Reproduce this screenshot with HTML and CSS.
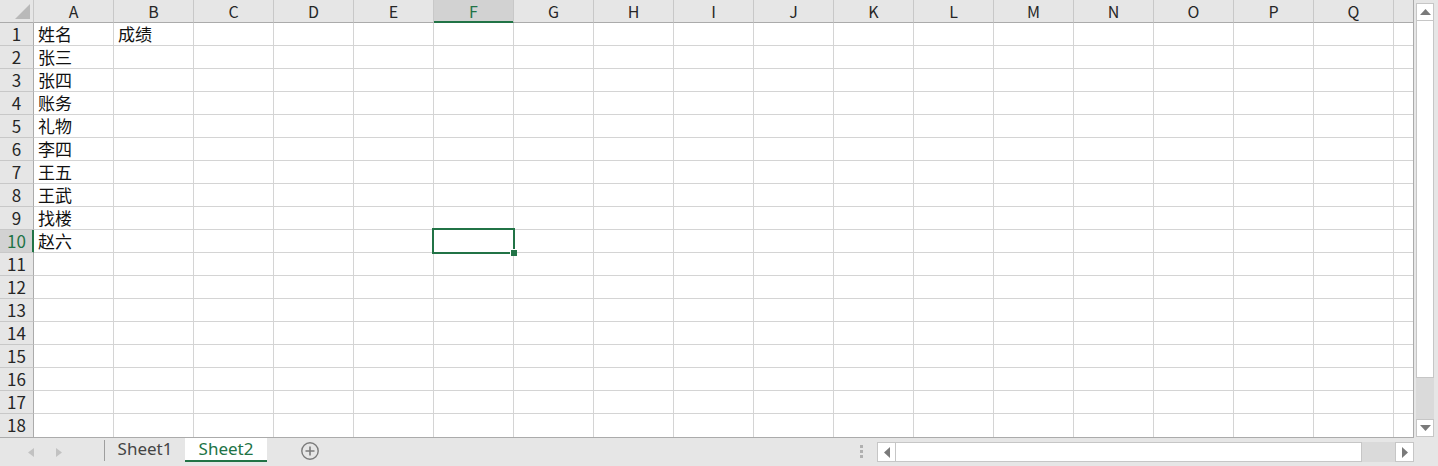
FILE: index.html
```html
<!DOCTYPE html>
<html lang="zh-CN">
<head>
<meta charset="utf-8">
<title>Sheet2</title>
<link rel="stylesheet" href="styles.css">
</head>
<body>
<div class="app">
  <div class="main">
    <div class="sheet">
      <div class="row head">
        <div class="corner"><span class="tri"></span></div>
        <div class="ch">A</div><div class="ch">B</div><div class="ch">C</div><div class="ch">D</div><div class="ch">E</div><div class="ch sel">F</div><div class="ch">G</div><div class="ch">H</div><div class="ch">I</div><div class="ch">J</div><div class="ch">K</div><div class="ch">L</div><div class="ch">M</div><div class="ch">N</div><div class="ch">O</div><div class="ch">P</div><div class="ch">Q</div><div class="ch part"></div>
      </div>
      <div class="row"><div class="rh">1</div><div class="c">姓名</div><div class="c">成绩</div><div class="c"></div><div class="c"></div><div class="c"></div><div class="c"></div><div class="c"></div><div class="c"></div><div class="c"></div><div class="c"></div><div class="c"></div><div class="c"></div><div class="c"></div><div class="c"></div><div class="c"></div><div class="c"></div><div class="c"></div><div class="c part"></div></div>
      <div class="row"><div class="rh">2</div><div class="c">张三</div><div class="c"></div><div class="c"></div><div class="c"></div><div class="c"></div><div class="c"></div><div class="c"></div><div class="c"></div><div class="c"></div><div class="c"></div><div class="c"></div><div class="c"></div><div class="c"></div><div class="c"></div><div class="c"></div><div class="c"></div><div class="c"></div><div class="c part"></div></div>
      <div class="row"><div class="rh">3</div><div class="c">张四</div><div class="c"></div><div class="c"></div><div class="c"></div><div class="c"></div><div class="c"></div><div class="c"></div><div class="c"></div><div class="c"></div><div class="c"></div><div class="c"></div><div class="c"></div><div class="c"></div><div class="c"></div><div class="c"></div><div class="c"></div><div class="c"></div><div class="c part"></div></div>
      <div class="row"><div class="rh">4</div><div class="c">账务</div><div class="c"></div><div class="c"></div><div class="c"></div><div class="c"></div><div class="c"></div><div class="c"></div><div class="c"></div><div class="c"></div><div class="c"></div><div class="c"></div><div class="c"></div><div class="c"></div><div class="c"></div><div class="c"></div><div class="c"></div><div class="c"></div><div class="c part"></div></div>
      <div class="row"><div class="rh">5</div><div class="c">礼物</div><div class="c"></div><div class="c"></div><div class="c"></div><div class="c"></div><div class="c"></div><div class="c"></div><div class="c"></div><div class="c"></div><div class="c"></div><div class="c"></div><div class="c"></div><div class="c"></div><div class="c"></div><div class="c"></div><div class="c"></div><div class="c"></div><div class="c part"></div></div>
      <div class="row"><div class="rh">6</div><div class="c">李四</div><div class="c"></div><div class="c"></div><div class="c"></div><div class="c"></div><div class="c"></div><div class="c"></div><div class="c"></div><div class="c"></div><div class="c"></div><div class="c"></div><div class="c"></div><div class="c"></div><div class="c"></div><div class="c"></div><div class="c"></div><div class="c"></div><div class="c part"></div></div>
      <div class="row"><div class="rh">7</div><div class="c">王五</div><div class="c"></div><div class="c"></div><div class="c"></div><div class="c"></div><div class="c"></div><div class="c"></div><div class="c"></div><div class="c"></div><div class="c"></div><div class="c"></div><div class="c"></div><div class="c"></div><div class="c"></div><div class="c"></div><div class="c"></div><div class="c"></div><div class="c part"></div></div>
      <div class="row"><div class="rh">8</div><div class="c">王武</div><div class="c"></div><div class="c"></div><div class="c"></div><div class="c"></div><div class="c"></div><div class="c"></div><div class="c"></div><div class="c"></div><div class="c"></div><div class="c"></div><div class="c"></div><div class="c"></div><div class="c"></div><div class="c"></div><div class="c"></div><div class="c"></div><div class="c part"></div></div>
      <div class="row"><div class="rh">9</div><div class="c">找楼</div><div class="c"></div><div class="c"></div><div class="c"></div><div class="c"></div><div class="c"></div><div class="c"></div><div class="c"></div><div class="c"></div><div class="c"></div><div class="c"></div><div class="c"></div><div class="c"></div><div class="c"></div><div class="c"></div><div class="c"></div><div class="c"></div><div class="c part"></div></div>
      <div class="row"><div class="rh sel">10</div><div class="c">赵六</div><div class="c"></div><div class="c"></div><div class="c"></div><div class="c"></div><div class="c active"><span class="selbox"><span class="handle"></span></span></div><div class="c"></div><div class="c"></div><div class="c"></div><div class="c"></div><div class="c"></div><div class="c"></div><div class="c"></div><div class="c"></div><div class="c"></div><div class="c"></div><div class="c"></div><div class="c part"></div></div>
      <div class="row"><div class="rh">11</div><div class="c"></div><div class="c"></div><div class="c"></div><div class="c"></div><div class="c"></div><div class="c"></div><div class="c"></div><div class="c"></div><div class="c"></div><div class="c"></div><div class="c"></div><div class="c"></div><div class="c"></div><div class="c"></div><div class="c"></div><div class="c"></div><div class="c"></div><div class="c part"></div></div>
      <div class="row"><div class="rh">12</div><div class="c"></div><div class="c"></div><div class="c"></div><div class="c"></div><div class="c"></div><div class="c"></div><div class="c"></div><div class="c"></div><div class="c"></div><div class="c"></div><div class="c"></div><div class="c"></div><div class="c"></div><div class="c"></div><div class="c"></div><div class="c"></div><div class="c"></div><div class="c part"></div></div>
      <div class="row"><div class="rh">13</div><div class="c"></div><div class="c"></div><div class="c"></div><div class="c"></div><div class="c"></div><div class="c"></div><div class="c"></div><div class="c"></div><div class="c"></div><div class="c"></div><div class="c"></div><div class="c"></div><div class="c"></div><div class="c"></div><div class="c"></div><div class="c"></div><div class="c"></div><div class="c part"></div></div>
      <div class="row"><div class="rh">14</div><div class="c"></div><div class="c"></div><div class="c"></div><div class="c"></div><div class="c"></div><div class="c"></div><div class="c"></div><div class="c"></div><div class="c"></div><div class="c"></div><div class="c"></div><div class="c"></div><div class="c"></div><div class="c"></div><div class="c"></div><div class="c"></div><div class="c"></div><div class="c part"></div></div>
      <div class="row"><div class="rh">15</div><div class="c"></div><div class="c"></div><div class="c"></div><div class="c"></div><div class="c"></div><div class="c"></div><div class="c"></div><div class="c"></div><div class="c"></div><div class="c"></div><div class="c"></div><div class="c"></div><div class="c"></div><div class="c"></div><div class="c"></div><div class="c"></div><div class="c"></div><div class="c part"></div></div>
      <div class="row"><div class="rh">16</div><div class="c"></div><div class="c"></div><div class="c"></div><div class="c"></div><div class="c"></div><div class="c"></div><div class="c"></div><div class="c"></div><div class="c"></div><div class="c"></div><div class="c"></div><div class="c"></div><div class="c"></div><div class="c"></div><div class="c"></div><div class="c"></div><div class="c"></div><div class="c part"></div></div>
      <div class="row"><div class="rh">17</div><div class="c"></div><div class="c"></div><div class="c"></div><div class="c"></div><div class="c"></div><div class="c"></div><div class="c"></div><div class="c"></div><div class="c"></div><div class="c"></div><div class="c"></div><div class="c"></div><div class="c"></div><div class="c"></div><div class="c"></div><div class="c"></div><div class="c"></div><div class="c part"></div></div>
      <div class="row last"><div class="rh">18</div><div class="c"></div><div class="c"></div><div class="c"></div><div class="c"></div><div class="c"></div><div class="c"></div><div class="c"></div><div class="c"></div><div class="c"></div><div class="c"></div><div class="c"></div><div class="c"></div><div class="c"></div><div class="c"></div><div class="c"></div><div class="c"></div><div class="c"></div><div class="c part"></div></div>
    </div>
    <div class="vscroll">
      <div class="sbtn"><svg width="11" height="6" viewBox="0 0 11 6"><polygon points="0,6 11,6 5.5,0" fill="#7a7a7a"/></svg></div>
      <div class="vthumb"></div>
      <div class="vtrack"></div>
      <div class="sbtn"><svg width="11" height="6" viewBox="0 0 11 6"><polygon points="0,0 11,0 5.5,6" fill="#7a7a7a"/></svg></div>
    </div>
  </div>
  <div class="tabbar">
    <div class="nav">
      <svg width="6" height="9" viewBox="0 0 6 9"><polygon points="6,0 6,9 0,4.5" fill="#c2c2c2"/></svg>
      <svg width="6" height="9" viewBox="0 0 6 9"><polygon points="0,0 0,9 6,4.5" fill="#c2c2c2"/></svg>
    </div>
    <div class="tsep"></div>
    <div class="tab">Sheet1</div>
    <div class="tab active">Sheet2</div>
    <div class="add"><svg width="20" height="20" viewBox="0 0 20 20"><circle cx="10" cy="10" r="8.2" fill="none" stroke="#7b7b7b" stroke-width="1.4"/><path d="M10 5.5V14.5M5.5 10H14.5" stroke="#7b7b7b" stroke-width="1.6"/></svg></div>
    <div class="spacer"></div>
    <div class="grip"><span></span><span></span><span></span></div>
    <div class="hscroll">
      <div class="hbtn"><svg width="6" height="11" viewBox="0 0 6 11"><polygon points="6,0 6,11 0,5.5" fill="#7a7a7a"/></svg></div>
      <div class="hthumb"></div>
      <div class="htrack"></div>
      <div class="hbtn"><svg width="6" height="11" viewBox="0 0 6 11"><polygon points="0,0 0,11 6,5.5" fill="#7a7a7a"/></svg></div>
    </div>
  </div>
</div>
</body>
</html>
```
FILE: styles.css
```css
html, body {
  margin: 0;
  padding: 0;
}
body {
  width: 1438px;
  height: 466px;
  overflow: hidden;
  background: #e6e6e6;
  font-family: "Noto Sans CJK SC", "Noto Sans", sans-serif;
  color: #1f1f1f;
}
.app {
  display: flex;
  flex-direction: column;
  height: 466px;
}
.main {
  display: flex;
  height: 438px;
}
.sheet {
  width: 1414px;
  background: #fff;
  border-right: 1px solid #ababab;
  border-bottom: 1px solid #ababab;
  box-sizing: border-box;
  height: 438px;
  overflow: hidden;
}
.row {
  display: flex;
  height: 23px;
}
.row > div {
  box-sizing: border-box;
  height: 23px;
  flex: none;
}
.c {
  width: 80px;
  border-right: 1px solid #d4d4d4;
  border-bottom: 1px solid #d4d4d4;
  font-size: 17px;
  line-height: 22px;
  padding-left: 4px;
  white-space: nowrap;
  color: #111;
}
.c.part, .ch.part {
  width: 20px;
  border-right: none;
}
.row.last .c { border-bottom: none; }
.rh {
  width: 34px;
  background: #e6e6e6;
  border-right: 1px solid #ababab;
  border-bottom: 1px solid #c8c8c8;
  text-align: center;
  font-size: 17px;
  line-height: 22px;
  color: #262626;
}
.row.last .rh { border-bottom: none; }
.rh.sel {
  background: #d2d2d2;
  color: #217346;
  border-right: 1px solid #217346;
  box-shadow: inset -1px 0 #217346;
}
.head .ch, .corner {
  background: #e6e6e6;
  border-bottom: 1px solid #ababab;
}
.corner {
  width: 34px;
  border-right: 1px solid #c8c8c8;
  display: flex;
  align-items: flex-end;
  justify-content: flex-end;
  padding: 0 3px 3px 0;
}
.tri {
  width: 0;
  height: 0;
  border-left: 15px solid transparent;
  border-bottom: 15px solid #b9b9b9;
}
.ch {
  width: 80px;
  border-right: 1px solid #c8c8c8;
  text-align: center;
  font-size: 16px;
  line-height: 22px;
  color: #262626;
}
.head .ch.sel {
  background: #d2d2d2;
  color: #217346;
  border-bottom-color: #217346;
  box-shadow: inset 0 -1px #217346;
}
.c.active {
  position: relative;
}
.selbox {
  position: absolute;
  left: -2px;
  top: -2px;
  width: 83px;
  height: 26px;
  border: 2px solid #217346;
  box-sizing: border-box;
}
.handle {
  position: absolute;
  right: -4px;
  bottom: -4px;
  width: 6px;
  height: 6px;
  background: #217346;
  border: 1px solid #fff;
  border-right: none;
  border-bottom: none;
}
.vscroll {
  width: 24px;
  display: flex;
  flex-direction: column;
  padding: 3px 4px 1px 2px;
  box-sizing: border-box;
}
.sbtn, .hbtn {
  background: #fff;
  border: 1px solid #c6c6c6;
  box-sizing: border-box;
  display: flex;
  align-items: center;
  justify-content: center;
  flex: none;
}
.sbtn { height: 18px; }
.vthumb {
  height: 357px;
  background: #fff;
  border: 1px solid #c6c6c6;
  border-top: none;
  box-sizing: border-box;
  flex: none;
}
.vtrack {
  flex: 1;
  background: #dadada;
}
.tabbar {
  display: flex;
  align-items: stretch;
  height: 28px;
}
.nav {
  width: 104px;
  display: flex;
  align-items: center;
  gap: 22px;
  padding-left: 28px;
  box-sizing: border-box;
}
.tsep {
  width: 1px;
  background: #9e9e9e;
  margin: 2px 0 5px;
}
.tab {
  width: 80px;
  font-family: "Noto Sans", "Noto Sans CJK SC", sans-serif;
  font-size: 17px;
  line-height: 22px;
  color: #444;
  text-align: center;
  margin-bottom: 4px;
  box-sizing: border-box;
}
.tab.active {
  width: 82px;
  background: #fff;
  color: #217346;
  border-bottom: 2px solid #217346;
}
.add {
  width: 20px;
  margin-left: 33px;
  display: flex;
  align-items: center;
  padding-bottom: 2px;
}
.spacer { flex: 1; }
.grip {
  display: flex;
  flex-direction: column;
  gap: 2px;
  justify-content: center;
  margin-right: 14px;
  padding-bottom: 2px;
}
.grip span {
  width: 3px;
  height: 3px;
  background: #b0b0b0;
}
.hscroll {
  display: flex;
  width: 537px;
  height: 20px;
  margin-top: 4px;
  margin-right: 24px;
}
.hbtn { width: 19px; height: 20px; }
.hthumb {
  width: 466px;
  background: #fff;
  border: 1px solid #c6c6c6;
  border-left: none;
  box-sizing: border-box;
}
.htrack {
  flex: 1;
  background: #dadada;
}
```
